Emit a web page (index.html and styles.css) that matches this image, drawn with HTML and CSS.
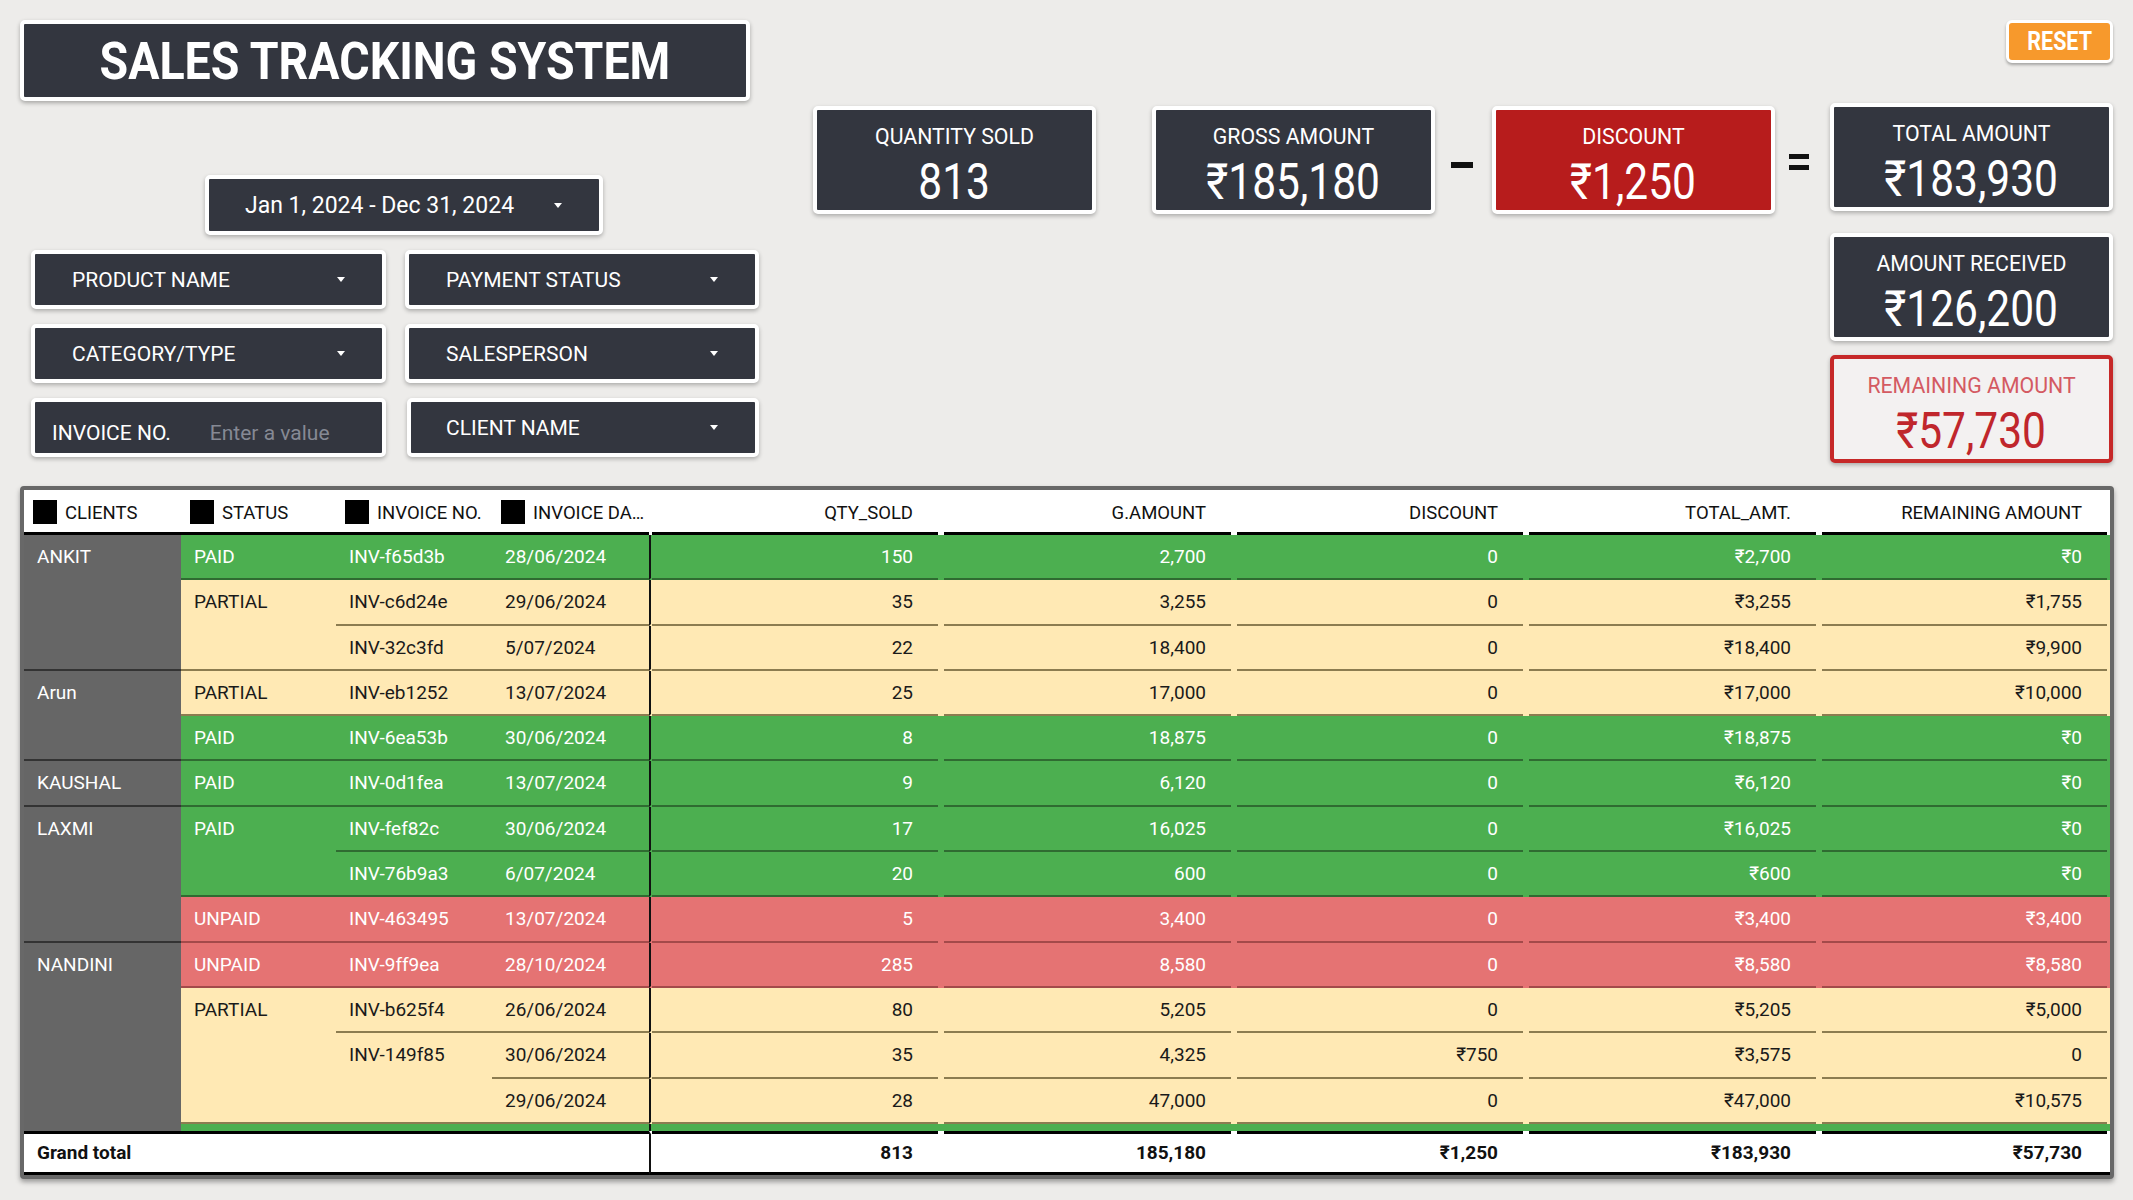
FILE: index.html
```html
<!DOCTYPE html>
<html lang="en">
<head>
<meta charset="utf-8">
<title>Sales Tracking System</title>
<link rel="stylesheet" href="styles.css">
</head>
<body>
<div class="page">
  <div class="top">
    <div class="left">
      <div class="title"><span class="title-text">SALES TRACKING SYSTEM</span></div>
      <div class="box date"><span>Jan 1, 2024 - Dec 31, 2024</span><span class="caret"></span></div>
      <div class="filters">
        <div class="box filter"><span>PRODUCT NAME</span><span class="caret"></span></div>
        <div class="box filter"><span>PAYMENT STATUS</span><span class="caret"></span></div>
        <div class="box filter"><span>CATEGORY/TYPE</span><span class="caret"></span></div>
        <div class="box filter"><span>SALESPERSON</span><span class="caret"></span></div>
        <div class="box filter input"><span>INVOICE NO.</span><span class="placeholder">Enter a value</span></div>
        <div class="box filter client-filter"><span>CLIENT NAME</span><span class="caret"></span></div>
      </div>
    </div>
    <div class="kpis">
      <div class="reset"><span>RESET</span></div>
      <div class="card qty"><span class="label">QUANTITY SOLD</span><span class="value">813</span></div>
      <div class="card gross"><span class="label">GROSS AMOUNT</span><span class="value">₹185,180</span></div>
      <div class="op minus-op"><span class="minus"></span></div>
      <div class="card disc"><span class="label">DISCOUNT</span><span class="value">₹1,250</span></div>
      <div class="op eq-op"><span class="eq"><i></i><i></i></span></div>
      <div class="card total"><span class="label">TOTAL AMOUNT</span><span class="value">₹183,930</span></div>
      <div class="card received"><span class="label">AMOUNT RECEIVED</span><span class="value">₹126,200</span></div>
      <div class="card remaining"><span class="label">REMAINING AMOUNT</span><span class="value">₹57,730</span></div>
    </div>
  </div>

  <div class="table-wrap">
    <table class="pivot">
      <colgroup>
        <col class="c1"><col class="c2"><col class="c3"><col class="c4">
        <col class="c5"><col class="c6"><col class="c7"><col class="c8"><col class="c9">
      </colgroup>
      <thead>
        <tr>
          <th><span class="sq"></span>CLIENTS</th>
          <th><span class="sq"></span>STATUS</th>
          <th><span class="sq"></span>INVOICE NO.</th>
          <th><span class="sq"></span>INVOICE DA…</th>
          <th class="n">QTY_SOLD</th>
          <th class="n">G.AMOUNT</th>
          <th class="n">DISCOUNT</th>
          <th class="n">TOTAL_AMT.</th>
          <th class="n">REMAINING AMOUNT</th>
        </tr>
      </thead>
      <tbody>
        <tr class="g"><td class="client" rowspan="3">ANKIT</td><td>PAID</td><td>INV-f65d3b</td><td>28/06/2024</td><td class="n q">150</td><td class="n">2,700</td><td class="n">0</td><td class="n">₹2,700</td><td class="n">₹0</td></tr>
        <tr class="y"><td rowspan="2">PARTIAL</td><td>INV-c6d24e</td><td>29/06/2024</td><td class="n q">35</td><td class="n">3,255</td><td class="n">0</td><td class="n">₹3,255</td><td class="n">₹1,755</td></tr>
        <tr class="y"><td>INV-32c3fd</td><td>5/07/2024</td><td class="n q">22</td><td class="n">18,400</td><td class="n">0</td><td class="n">₹18,400</td><td class="n">₹9,900</td></tr>
        <tr class="y"><td class="client" rowspan="2">Arun</td><td>PARTIAL</td><td>INV-eb1252</td><td>13/07/2024</td><td class="n q">25</td><td class="n">17,000</td><td class="n">0</td><td class="n">₹17,000</td><td class="n">₹10,000</td></tr>
        <tr class="g"><td>PAID</td><td>INV-6ea53b</td><td>30/06/2024</td><td class="n q">8</td><td class="n">18,875</td><td class="n">0</td><td class="n">₹18,875</td><td class="n">₹0</td></tr>
        <tr class="g"><td class="client">KAUSHAL</td><td>PAID</td><td>INV-0d1fea</td><td>13/07/2024</td><td class="n q">9</td><td class="n">6,120</td><td class="n">0</td><td class="n">₹6,120</td><td class="n">₹0</td></tr>
        <tr class="g"><td class="client" rowspan="3">LAXMI</td><td rowspan="2">PAID</td><td>INV-fef82c</td><td>30/06/2024</td><td class="n q">17</td><td class="n">16,025</td><td class="n">0</td><td class="n">₹16,025</td><td class="n">₹0</td></tr>
        <tr class="g"><td>INV-76b9a3</td><td>6/07/2024</td><td class="n q">20</td><td class="n">600</td><td class="n">0</td><td class="n">₹600</td><td class="n">₹0</td></tr>
        <tr class="r"><td>UNPAID</td><td>INV-463495</td><td>13/07/2024</td><td class="n q">5</td><td class="n">3,400</td><td class="n">0</td><td class="n">₹3,400</td><td class="n">₹3,400</td></tr>
        <tr class="r"><td class="client open" rowspan="5">NANDINI</td><td>UNPAID</td><td>INV-9ff9ea</td><td>28/10/2024</td><td class="n q">285</td><td class="n">8,580</td><td class="n">0</td><td class="n">₹8,580</td><td class="n">₹8,580</td></tr>
        <tr class="y"><td rowspan="3">PARTIAL</td><td>INV-b625f4</td><td>26/06/2024</td><td class="n q">80</td><td class="n">5,205</td><td class="n">0</td><td class="n">₹5,205</td><td class="n">₹5,000</td></tr>
        <tr class="y"><td rowspan="2">INV-149f85</td><td>30/06/2024</td><td class="n q">35</td><td class="n">4,325</td><td class="n">₹750</td><td class="n">₹3,575</td><td class="n">0</td></tr>
        <tr class="y"><td>29/06/2024</td><td class="n q">28</td><td class="n">47,000</td><td class="n">0</td><td class="n">₹47,000</td><td class="n">₹10,575</td></tr>
        <tr class="g peek"><td></td><td></td><td></td><td class="n q"></td><td class="n"></td><td class="n"></td><td class="n"></td><td class="n"></td></tr>
      </tbody>
      <tfoot>
        <tr class="total"><td colspan="4">Grand total</td><td class="n q">813</td><td class="n">185,180</td><td class="n">₹1,250</td><td class="n">₹183,930</td><td class="n">₹57,730</td></tr>
      </tfoot>
    </table>
  </div>
</div>
</body>
</html>
```

FILE: styles.css
```css
* { box-sizing: border-box; }
html, body { margin: 0; padding: 0; }
body {
  background: #edecea;
  font-family: Roboto, "Liberation Sans", sans-serif;
  width: 2133px;
  height: 1200px;
  overflow: hidden;
  color: #111;
}
.page { padding: 20px; }

/* ---------- top area ---------- */
.top { display: flex; align-items: flex-start; }
.left { width: 740px; }

.title {
  width: 730px;
  height: 81px;
  background: #33363f;
  border: 4px solid #fff;
  border-radius: 5px;
  box-shadow: 0 2px 4px rgba(0,0,0,.3);
  display: flex;
  align-items: center;
  justify-content: center;
}
.title-text {
  display: inline-block;
  color: #fff;
  font-weight: 700;
  font-size: 51px;
  line-height: 50px;
  transform: scaleX(.912);
  padding-top: 3px;
}

.box {
  background: #33363f;
  border: 4px solid #fff;
  border-radius: 5px;
  box-shadow: 0 2px 4px rgba(0,0,0,.28);
  color: #fff;
  display: flex;
  align-items: center;
}
.caret {
  width: 0;
  height: 0;
  border-left: 4px solid transparent;
  border-right: 4px solid transparent;
  border-top: 5px solid #fff;
}
.date {
  width: 398px;
  height: 60px;
  margin: 74px 0 0 185px;
  padding: 0 37px 0 36px;
  justify-content: space-between;
  font-size: 23px;
}
.filters {
  display: grid;
  grid-template-columns: 355px 354px;
  column-gap: 19px;
  row-gap: 15px;
  margin: 15px 0 0 11px;
}
.filter {
  height: 59px;
  padding: 0 37px;
  justify-content: space-between;
  font-size: 21px;
}
.filter.input {
  justify-content: flex-start;
  padding: 10px 0 0 17px;
  font-size: 21px;
}
.placeholder { color: #858994; margin-left: 39px; }
.client-filter { margin-left: 2px; padding-left: 35px; }

/* ---------- KPI cards ---------- */
.kpis {
  margin-left: 53px;
  display: grid;
  grid-template-columns: 283px 56px 283px 57px 283px 55px 283px;
  grid-template-rows: 43px auto auto auto;
}
.reset {
  grid-column: 7;
  grid-row: 1;
  justify-self: end;
  width: 107px;
  height: 43px;
  background: #f7992c;
  border: 3px solid #fff;
  border-radius: 6px;
  box-shadow: 0 2px 3px rgba(0,0,0,.3);
  display: flex;
  align-items: center;
  justify-content: center;
}
.reset span {
  display: inline-block;
  color: #fff;
  font-weight: 700;
  font-size: 25px;
  transform: scaleX(.86);
}
.card {
  height: 108px;
  background: #33363f;
  border: 4px solid #fff;
  border-radius: 5px;
  box-shadow: 0 2px 4px rgba(0,0,0,.28);
  color: #fff;
  display: flex;
  flex-direction: column;
  align-items: center;
  padding-top: 15px;
}
.card .label { font-size: 21.3px; line-height: 24px; }
.card .value {
  display: inline-block;
  font-size: 50px;
  line-height: 50px;
  margin-top: 8px;
  transform: scaleX(.85);
}
.qty   { grid-column: 1; grid-row: 2; margin-top: 43px; }
.gross { grid-column: 3; grid-row: 2; margin-top: 43px; }
.disc  { grid-column: 5; grid-row: 2; margin-top: 43px; background: #b71c1c; }
.total { grid-column: 7; grid-row: 2; margin-top: 40px; }
.received  { grid-column: 7; grid-row: 3; margin-top: 19px; }
.remaining {
  grid-column: 7;
  grid-row: 4;
  margin-top: 14px;
  background: #f3f1f1;
  border-color: #c62828;
}
.remaining .label { color: #d45a62; }
.remaining .value { color: #c0262c; }

.op {
  grid-row: 2;
  margin-top: 43px;
  height: 108px;
  display: flex;
  align-items: center;
  justify-content: center;
}
.minus-op { grid-column: 4; padding: 10px 4px 0 0; }
.eq-op { grid-column: 6; padding: 4px 8px 0 0; }
.minus { width: 22px; height: 6px; background: #111; }
.eq { display: flex; flex-direction: column; gap: 6px; }
.eq i { display: block; width: 20px; height: 5px; background: #111; }

/* ---------- table ---------- */
.table-wrap {
  margin-top: 23px;
  width: 2094px;
  border: 4px solid #686868;
  border-radius: 4px;
  box-shadow: 0 3px 5px rgba(0,0,0,.35);
  background: #fff;
}
.pivot {
  width: 2086px;
  table-layout: fixed;
  border-collapse: separate;
  border-spacing: 0;
  font-size: 19px;
}
.c1 { width: 157px; } .c2 { width: 155px; } .c3 { width: 156px; } .c4 { width: 157px; }
.c5 { width: 292px; } .c6 { width: 293px; } .c7 { width: 292px; } .c8 { width: 293px; } .c9 { width: 291px; }

.pivot thead tr { height: 45px; }
.pivot th {
  font-weight: 400;
  font-size: 18.5px;
  text-align: left;
  padding: 4px 0 0 9px;
  border-bottom: 3px solid #000;
  vertical-align: middle;
  white-space: nowrap;
  overflow: hidden;
  color: #111;
  background: #fff;
}
.sq {
  display: inline-block;
  width: 24px;
  height: 24px;
  background: #000;
  vertical-align: middle;
  margin: -3px 8px 0 0;
}
.pivot th.n {
  text-align: right;
  padding: 4px 28px 0 0;
  border-bottom-color: transparent;
  background-image: linear-gradient(#000, #000);
  background-repeat: no-repeat;
  background-origin: border-box;
  background-position: 50% 100%;
  background-size: calc(100% - 6px) 3px;
}

.pivot tbody tr { height: 45.3px; }
tr.g { --bg: #4caf50; --line: #2f6b31; --fg: #fff; }
tr.y { --bg: #ffe9b4; --line: #8c7c50; --fg: #1a1a1a; }
tr.r { --bg: #e57373; --line: #a34a4a; --fg: #fff; }
.pivot td.client { --bg: #666666; --line: #333; --fg: #fff; }

.pivot tbody td {
  background-color: var(--bg);
  color: var(--fg);
  border-bottom: 2px solid var(--line);
  vertical-align: top;
  padding: 12px 13px 0;
  line-height: 20px;
  white-space: nowrap;
  overflow: hidden;
}
.pivot tbody td.n {
  text-align: right;
  padding: 12px 28px 0 0;
  border-bottom-color: transparent;
  background-image: linear-gradient(var(--line), var(--line));
  background-repeat: no-repeat;
  background-origin: border-box;
  background-position: 50% 100%;
  background-size: calc(100% - 6px) 2px;
}
.pivot td.q { border-left: 2px solid #111; }
.pivot td.client.open { border-bottom: 0; }

.pivot tbody tr.peek { height: 7px; }
.pivot tbody tr.peek td {
  padding: 0;
  border-bottom: 0;
  background-image: none;
  font-size: 0;
  line-height: 0;
}

.pivot tfoot tr { height: 44px; }
.pivot tfoot td {
  background: #fff;
  font-weight: 700;
  color: #111;
  border-top: 3px solid #000;
  border-bottom: 3px solid #000;
  vertical-align: middle;
  padding: 0 0 0 13px;
  white-space: nowrap;
}
.pivot tfoot td.n {
  text-align: right;
  padding: 0 28px 0 0;
  border-top-color: transparent;
  background-image: linear-gradient(#000, #000);
  background-repeat: no-repeat;
  background-origin: border-box;
  background-position: 50% 0;
  background-size: calc(100% - 6px) 3px;
}
```
